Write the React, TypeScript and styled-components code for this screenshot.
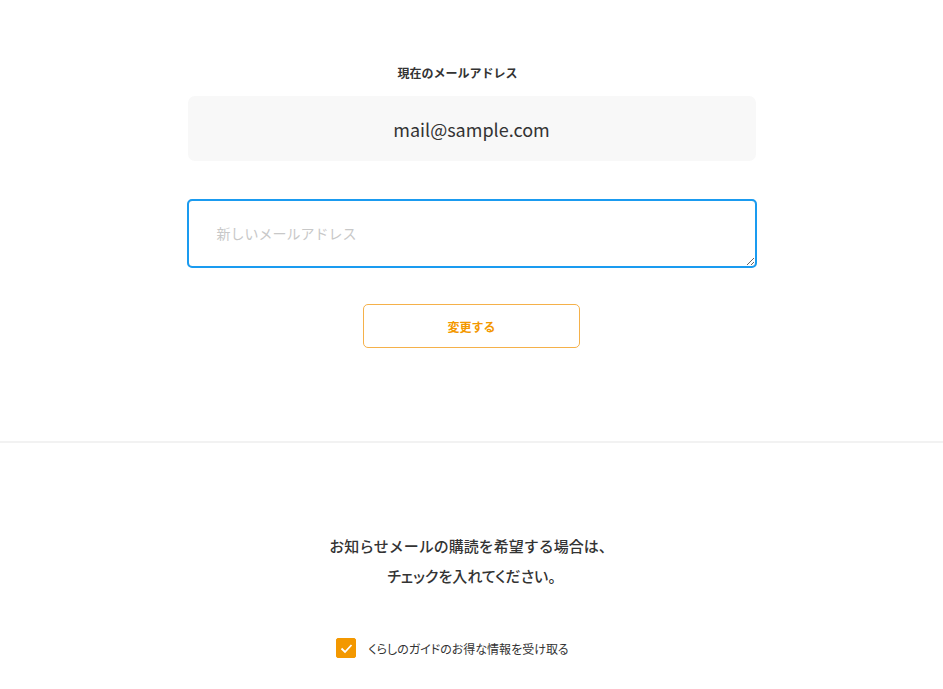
import React, { ReactElement, useState } from 'react';
import styled, { createGlobalStyle } from 'styled-components';

const GlobalStyle = createGlobalStyle`
  body {
    margin: 0;
    background: #fff;
    color: #333;
    font-family: "Noto Sans CJK JP", "Noto Sans", sans-serif;
  }
`;

const Page = styled.div`
  display: flex;
  flex-direction: column;
  align-items: center;
`;

const Section = styled.section`
  width: 568px;
  padding: 64px 0 93px;
  display: flex;
  flex-direction: column;
  align-items: center;
`;

const Label = styled.h2`
  margin: 0 28px 14px 0;
  font-size: 12px;
  line-height: 18px;
  font-weight: 700;
  color: #333;
`;

const CurrentMail = styled.div`
  width: 100%;
  height: 65px;
  box-sizing: border-box;
  background: #f8f8f8;
  border-radius: 7px;
  display: flex;
  align-items: center;
  justify-content: center;
  font-size: 18px;
  color: #333;
`;

const NewMail = styled.textarea`
  margin-top: 39px;
  width: 100%;
  height: 67px;
  box-sizing: border-box;
  padding: 21px 28px;
  border: 1px solid #c8c8c8;
  border-radius: 4px;
  outline: 2px solid #1a9bf0;
  outline-offset: -1px;
  font-family: inherit;
  font-size: 14px;
  line-height: 22px;
  color: #333;
  resize: vertical;
  &::placeholder {
    color: #c8c8c8;
  }
`;

const SubmitButton = styled.button`
  margin-top: 37px;
  width: 217px;
  height: 44px;
  background: #fff;
  border: 1px solid #f5b14a;
  border-radius: 5px;
  color: #f39800;
  font-family: inherit;
  font-size: 12px;
  font-weight: 700;
  cursor: pointer;
`;

const Divider = styled.hr`
  width: 100%;
  margin: 0;
  border: none;
  border-top: 2px solid #f2f2f2;
`;

const Notice = styled.section`
  padding: 88px 0 40px;
  display: flex;
  flex-direction: column;
  align-items: center;
`;

const NoticeText = styled.p`
  margin: 0;
  text-align: center;
  font-size: 15px;
  line-height: 30px;
  font-weight: 500;
  color: #333;
`;

const Proportional = styled.span`
  font-feature-settings: "palt";
`;

const CheckRow = styled.label`
  margin: 47px 38px 0 0;
  display: flex;
  align-items: center;
  gap: 12px;
  font-size: 12px;
  font-feature-settings: "palt";
  color: #333;
  cursor: pointer;
`;

const Box = styled.span<{ $checked: boolean }>`
  width: 20px;
  height: 20px;
  border-radius: 2px;
  background: ${(p) => (p.$checked ? '#f39800' : '#fff')};
  border: 1px solid ${(p) => (p.$checked ? '#f39800' : '#ccc')};
  box-sizing: border-box;
  display: flex;
  align-items: center;
  justify-content: center;
`;

const HiddenInput = styled.input`
  display: none;
`;

export default function App(): ReactElement {
  const [checked, setChecked] = useState(true);

  return (
    <Page>
      <GlobalStyle />
      <Section>
        <Label>現在のメールアドレス</Label>
        <CurrentMail>mail@sample.com</CurrentMail>
        <NewMail placeholder="新しいメールアドレス" />
        <SubmitButton>変更する</SubmitButton>
      </Section>
      <Divider />
      <Notice>
        <NoticeText>
          お知らせメールの購読を希望する場合は、
          <br />
          <Proportional>チェックを入れてください。</Proportional>
        </NoticeText>
        <CheckRow>
          <HiddenInput type="checkbox" checked={checked} onChange={() => setChecked(!checked)} />
          <Box $checked={checked}>
            {checked && (
              <svg width="13" height="11" viewBox="0 0 13 11">
                <path d="M1.5 5.5 L5 9 L11.5 2" fill="none" stroke="#fff" strokeWidth="1.8" />
              </svg>
            )}
          </Box>
          くらしのガイドのお得な情報を受け取る
        </CheckRow>
      </Notice>
    </Page>
  );
}
